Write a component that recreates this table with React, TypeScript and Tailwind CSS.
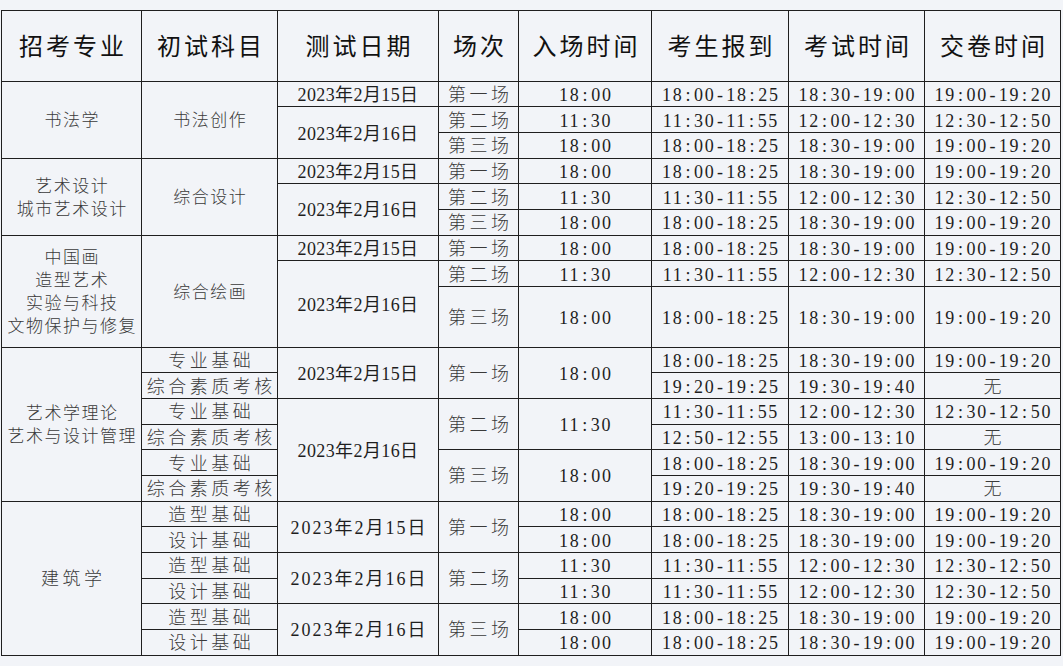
import React from "react";

type Kind = "H" | "A" | "B" | "N" | "D" | "E" | "W";
type Cell = { t: string | string[]; k: Kind; rs?: 1 | 2 | 3 | 4 | 6 };

const kindCls: Record<Kind, string> = {
  H: "text-[24px] tracking-[3px] pl-[3px] text-[#111] leading-none",
  A: "text-[17px] tracking-[1.5px] pl-[1.5px] text-[#3a3a3a] font-light leading-[23px]",
  B: "text-[18px] tracking-[3.5px] pl-[3.5px] text-[#3a3a3a] font-light leading-none",
  N: "text-[18px] tracking-[1.7px] pl-[1.7px] text-[#1e1e1e] leading-none",
  D: "text-[18px] tracking-[0.4px] text-[#1e1e1e] leading-none",
  E: "text-[18px] tracking-[2px] pl-[2px] text-[#1e1e1e] leading-none",
  W: "text-[18px] text-[#3a3a3a] font-light leading-none",
};

const rsCls: Record<number, string> = {
  1: "",
  2: "row-span-2",
  3: "row-span-3",
  4: "row-span-4",
  6: "row-span-6",
};

function fmt(s: string) {
  const out: React.ReactNode[] = [];
  let buf = "";
  s.split("").forEach((ch, i) => {
    if (ch === ":" || ch === "-") {
      if (buf) out.push(buf);
      buf = "";
      out.push(
        <span key={i} className={ch === ":" ? "mx-[2px]" : "mx-[1.5px]"}>
          {ch}
        </span>
      );
    } else buf += ch;
  });
  if (buf) out.push(buf);
  return out;
}

const H = (t: string): Cell => ({ t, k: "H" });
const A = (t: string | string[], rs: 1 | 2 | 3 | 4 | 6 = 1): Cell => ({ t, k: "A", rs });
const B = (t: string, rs: 1 | 2 | 3 | 4 | 6 = 1): Cell => ({ t, k: "B", rs });
const N = (t: string, rs: 1 | 2 | 3 | 4 | 6 = 1): Cell => ({ t, k: "N", rs });
const D = (t: string, rs: 1 | 2 | 3 | 4 | 6 = 1): Cell => ({ t, k: "D", rs });
const E = (t: string, rs: 1 | 2 | 3 | 4 | 6 = 1): Cell => ({ t, k: "E", rs });
const W = (): Cell => ({ t: "无", k: "W" });

const r1 = [N("18:00"), N("18:00-18:25"), N("18:30-19:00"), N("19:00-19:20")];
const r2 = [N("11:30"), N("11:30-11:55"), N("12:00-12:30"), N("12:30-12:50")];

function threeGroup(major: string[], subject: string): Cell[] {
  return [
    A(major, 3),
    A(subject, 3),
    D("2023年2月15日"),
    B("第一场"),
    ...r1,
    D("2023年2月16日", 2),
    B("第二场"),
    ...r2,
    B("第三场"),
    ...r1,
  ];
}

const cells: Cell[] = [
  H("招考专业"),
  H("初试科目"),
  H("测试日期"),
  H("场次"),
  H("入场时间"),
  H("考生报到"),
  H("考试时间"),
  H("交卷时间"),
  ...threeGroup(["书法学"], "书法创作"),
  ...threeGroup(["艺术设计", "城市艺术设计"], "综合设计"),
  ...threeGroup(["中国画", "造型艺术", "实验与科技", "文物保护与修复"], "综合绘画"),
  // 艺术学理论
  A(["艺术学理论", "艺术与设计管理"], 6),
  B("专业基础"),
  D("2023年2月15日", 2),
  B("第一场", 2),
  N("18:00", 2),
  N("18:00-18:25"),
  N("18:30-19:00"),
  N("19:00-19:20"),
  B("综合素质考核"),
  N("19:20-19:25"),
  N("19:30-19:40"),
  W(),
  B("专业基础"),
  D("2023年2月16日", 4),
  B("第二场", 2),
  N("11:30", 2),
  N("11:30-11:55"),
  N("12:00-12:30"),
  N("12:30-12:50"),
  B("综合素质考核"),
  N("12:50-12:55"),
  N("13:00-13:10"),
  W(),
  B("专业基础"),
  B("第三场", 2),
  N("18:00", 2),
  N("18:00-18:25"),
  N("18:30-19:00"),
  N("19:00-19:20"),
  B("综合素质考核"),
  N("19:20-19:25"),
  N("19:30-19:40"),
  W(),
  // 建筑学
  B("建筑学", 6),
  B("造型基础"),
  E("2023年2月15日", 2),
  B("第一场", 2),
  ...r1,
  B("设计基础"),
  ...r1,
  B("造型基础"),
  E("2023年2月16日", 2),
  B("第二场", 2),
  ...r2,
  B("设计基础"),
  ...r2,
  B("造型基础"),
  E("2023年2月16日", 2),
  B("第三场", 2),
  ...r1,
  B("设计基础"),
  ...r1,
];

export default function App() {
  return (
    <div className="w-[1063px] h-[666px] overflow-hidden bg-[#f2f4f8] pt-[10px] pl-px [font-family:'Liberation_Serif','Noto_Sans_CJK_SC',serif]">
      <div className="grid w-fit grid-cols-[139px_135px_160px_79px_132px_136px_135px_135px] grid-rows-[69.7px_repeat(8,24.67px)_59.7px_repeat(12,24.67px)] gap-px bg-[#1f1f1f] p-px">
        {cells.map((c, i) => (
          <div
            key={i}
            className={`flex flex-col items-center justify-center text-center whitespace-nowrap bg-[#f2f4f8] pt-[2px] ${rsCls[c.rs ?? 1]} ${kindCls[c.k]}`}
          >
            {Array.isArray(c.t)
              ? c.t.map((l, j) => <div key={j}>{l}</div>)
              : c.k === "N"
              ? <div>{fmt(c.t)}</div>
              : <div>{c.t}</div>}
          </div>
        ))}
      </div>
    </div>
  );
}
